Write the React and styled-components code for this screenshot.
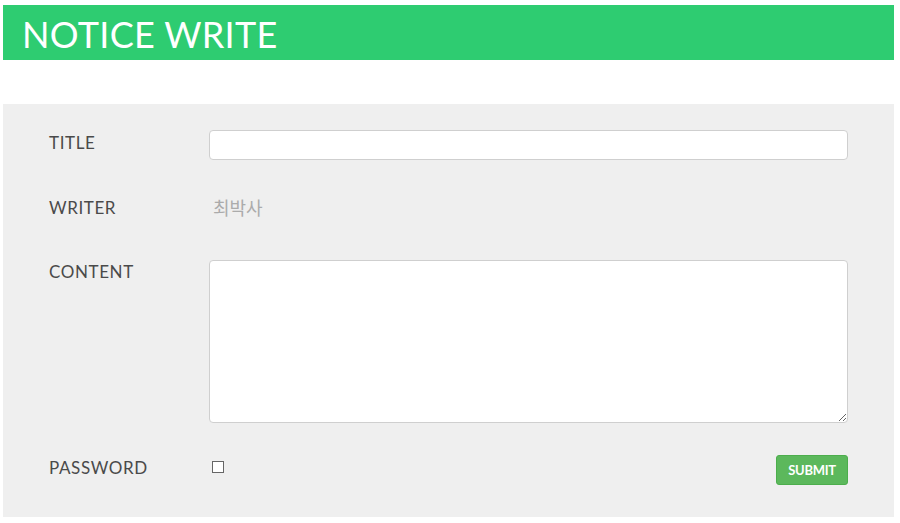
import React from "react";
import styled, { createGlobalStyle } from "styled-components";

const Global = createGlobalStyle`
  html, body { margin: 0; padding: 0; background: #fff; }
  body { font-family: "Lato", "Open Sans", sans-serif; }
  * { box-sizing: border-box; }
`;

const Page = styled.div`
  width: 891px;
  margin: 5px 0 0 3px;
`;

const Header = styled.header`
  height: 55px;
  background: #2ecc71;
  display: flex;
  align-items: center;
  padding-left: 19px;
`;

const Title = styled.h1`
  margin: 0;
  color: #fff;
  font-family: "Lato", sans-serif;
  font-weight: 400;
  font-size: 36px;
  letter-spacing: 0.3px;
  line-height: 1;
  padding-top: 2px;
`;

const Panel = styled.form`
  margin-top: 44px;
  background: #efefef;
  padding: 26px 46px 32px 46px;
  display: flex;
  flex-direction: column;
`;

const Row = styled.div`
  display: grid;
  grid-template-columns: 160px 1fr;
  align-items: ${(p) => (p.$top ? "start" : "center")};
  margin-top: ${(p) => p.$mt || 0}px;
  min-height: 30px;
`;

const Label = styled.label`
  font-family: "Lato", sans-serif;
  font-size: 17px;
  color: #4a4a4a;
  letter-spacing: 0.6px;
  padding-top: ${(p) => p.$pt || 0}px;
  padding-bottom: ${(p) => p.$pb || 0}px;
`;

const Input = styled.input`
  height: 30px;
  width: 100%;
  border: 1px solid #cfcfcf;
  border-radius: 4px;
  background: #fff;
  outline: none;
`;

const TextArea = styled.textarea`
  height: 163px;
  width: 100%;
  border: 1px solid #cfcfcf;
  border-radius: 4px;
  background: #fff;
  resize: vertical;
  outline: none;
`;

const Value = styled.span`
  font-family: "Noto Sans CJK KR", sans-serif;
  font-size: 18px;
  color: #ababab;
  padding-left: 4px;
`;

const Controls = styled.div`
  display: flex;
  align-items: center;
  justify-content: space-between;
`;

const Check = styled.input`
  appearance: none;
  margin: 0 0 6px 3px;
  width: 12px;
  height: 12px;
  border: 1.5px solid #666;
  background: #fff;
  border-radius: 0;
`;

const Submit = styled.button`
  width: 72px;
  height: 30px;
  border: 1px solid #4cae4c;
  border-radius: 3px;
  background: #5cb85c;
  color: #fff;
  font-family: "Lato", sans-serif;
  font-weight: 700;
  font-size: 13px;
  letter-spacing: -0.3px;
  padding: 0;
  cursor: pointer;
`;

export default function App() {
  return (
    <>
      <Global />
      <Page>
        <Header>
          <Title>NOTICE WRITE</Title>
        </Header>
        <Panel onSubmit={(e) => e.preventDefault()}>
          <Row>
            <Label $pb={6}>TITLE</Label>
            <Input type="text" />
          </Row>
          <Row $mt={32}>
            <Label>WRITER</Label>
            <Value>최박사</Value>
          </Row>
          <Row $mt={38} $top>
            <Label $pt={1}>CONTENT</Label>
            <TextArea />
          </Row>
          <Row $mt={32}>
            <Label $pb={6}>PASSWORD</Label>
            <Controls>
              <Check type="checkbox" />
              <Submit type="submit">SUBMIT</Submit>
            </Controls>
          </Row>
        </Panel>
      </Page>
    </>
  );
}
